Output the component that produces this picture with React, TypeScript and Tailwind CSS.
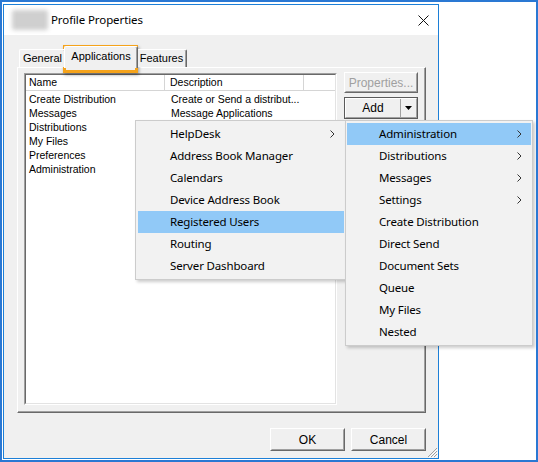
import React from "react";

function Chevron() {
  return (
    <svg width="5" height="8" viewBox="0 0 5 8" className="absolute right-[9px] top-[7px]">
      <path d="M0.5 0.5 L4 4 L0.5 7.5" fill="none" stroke="#333" strokeWidth="1" />
    </svg>
  );
}

function MenuItem({ label, hi, sub }: { label: string; hi?: boolean; sub?: boolean }) {
  return (
    <div className={`relative h-[22px] flex items-center pl-[32px] text-[11.5px] tracking-[-0.15px] text-black ${hi ? "bg-[#91c9f7]" : ""}`}>
      <span>{label}</span>
      {sub && <Chevron />}
    </div>
  );
}

function Tab({ label, w, selected }: { label: string; w: string; selected?: boolean }) {
  return (
    <div
      className={`${w} ${
        selected ? "h-[22px] -mb-px -mx-[2px] relative z-10 pb-[3px]" : "h-[18px]"
      } bg-[#f0f0f0] border-t border-l border-white border-r border-r-[#696969] rounded-t-[2px] shadow-[inset_-1px_0_0_#a0a0a0] flex items-center justify-center text-[11px]`}
    >
      {label}
    </div>
  );
}

function Raised({ className, children }: { className?: string; children?: React.ReactNode }) {
  return (
    <div className={`border border-t-white border-l-white border-r-[#696969] border-b-[#696969] ${className ?? ""}`}>
      <div className="w-full h-full border border-t-[#f0f0f0] border-l-[#f0f0f0] border-r-[#a0a0a0] border-b-[#a0a0a0] bg-[#f0f0f0] flex items-center justify-center">
        {children}
      </div>
    </div>
  );
}

export default function App() {
  const rows = [
    ["Create Distribution", "Create or Send a distribut..."],
    ["Messages", "Message Applications"],
    ["Distributions", ""],
    ["My Files", ""],
    ["Preferences", ""],
    ["Administration", ""],
  ];
  const menu1 = ["HelpDesk", "Address Book Manager", "Calendars", "Device Address Book", "Registered Users", "Routing", "Server Dashboard"];
  const menu2 = ["Administration", "Distributions", "Messages", "Settings", "Create Distribution", "Direct Send", "Document Sets", "Queue", "My Files", "Nested"];

  return (
    <div className="relative w-[538px] h-[462px] bg-white border-2 border-[#2a78d3] pl-px pt-[2px] overflow-hidden font-['Liberation_Sans',Arial,sans-serif] text-black">
      {/* window */}
      <div className="w-[436px] h-[455px] border border-[#1c7fd7] flex flex-col">
        {/* title bar */}
        <div className="h-[30px] bg-white flex items-center relative">
          <div className="ml-[8px] w-[36px] h-[20px] bg-[#cfcfcf] blur-[2px] rounded-[2px]" />
          <div className="ml-[3px] text-[11.5px] tracking-[-0.1px] font-['Noto_Sans','Open_Sans',sans-serif]">Profile Properties</div>
          <svg width="11" height="11" viewBox="0 0 11 11" className="ml-auto mr-[9px]">
            <path d="M0.5 0.5 L10.5 10.5 M10.5 0.5 L0.5 10.5" stroke="#111" strokeWidth="1" />
          </svg>
        </div>
        {/* body */}
        <div className="flex-1 bg-[#f0f0f0] pt-[11px] flex flex-col relative">
          {/* tabs */}
          <div className="ml-[13px] h-[21px] pl-[2px] flex items-end relative z-10">
            <Tab label="General" w="w-[47px]" />
            <Tab label="Applications" w="w-[74px]" selected />
            <Tab label="Features" w="w-[51px]" />
          </div>
          {/* panel */}
          <div className="ml-[13px] w-[409px] h-[346px] border border-t-white border-l-white border-r-[#696969] border-b-[#696969] shadow-[inset_-1px_-1px_0_#a0a0a0] pt-[4px] pl-[6px] flex gap-[7px]">
            {/* list */}
            <div className="mt-px w-[313px] h-[332px] border border-t-[#a0a0a0] border-l-[#a0a0a0] border-r-white border-b-white">
              <div className="w-full h-full border border-t-[#696969] border-l-[#696969] border-r-[#e3e3e3] border-b-[#e3e3e3] bg-white text-[10.5px]">
                <div className="flex h-[16px] border-b border-[#d5d5d5]">
                  <div className="w-[139px] border-r border-[#d5d5d5] pl-[3px] flex items-center">Name</div>
                  <div className="w-[139px] border-r border-[#d5d5d5] pl-[5px] flex items-center">Description</div>
                  <div className="flex-1" />
                </div>
                <div className="pt-[2px]">
                  {rows.map(([a, b]) => (
                    <div key={a} className="flex h-[14px] items-center">
                      <div className="w-[142px] pl-[3px] whitespace-nowrap">{a}</div>
                      <div className="pl-[3px] whitespace-nowrap">{b}</div>
                    </div>
                  ))}
                </div>
              </div>
            </div>
            {/* side buttons */}
            <div className="w-[74px] flex flex-col gap-[4px]">
              <Raised className="h-[21px] text-[12px] text-[#a0a0a0]">Properties...</Raised>
              <div className="h-[22px] border border-[#5a5a5a]">
                <div className="w-full h-full border border-t-white border-l-white border-r-[#a0a0a0] border-b-[#a0a0a0] flex text-[12px]">
                  <div className="flex-1 flex items-center justify-center border-r border-[#a0a0a0]">Add</div>
                  <div className="w-[15px] flex items-center justify-center">
                    <svg width="7" height="4" viewBox="0 0 7 4"><path d="M0 0 H7 L3.5 4 Z" fill="#000" /></svg>
                  </div>
                </div>
              </div>
            </div>
          </div>
          {/* bottom buttons */}
          <div className="mt-[15px] mr-[12px] flex justify-end gap-[6px]">
            <Raised className="w-[75px] h-[23px] text-[12px]">OK</Raised>
            <Raised className="w-[75px] h-[23px] text-[12px]">Cancel</Raised>
          </div>
          {/* grip */}
          <svg width="12" height="12" viewBox="0 0 12 12" className="absolute right-0 bottom-0">
            <path d="M11 2 L2 11 M11 5 L5 11 M11 8 L8 11" stroke="#a0a0a0" strokeWidth="1" />
            <path d="M12 3 L3 12 M12 6 L6 12 M12 9 L9 12" stroke="#ffffff" strokeWidth="1" />
          </svg>
        </div>
      </div>

      {/* orange highlight */}
      <div className="absolute left-[61px] top-[43px] w-[75px] h-[28px] border-[3px] border-[#f5a31b] shadow-[1px_2px_3px_rgba(0,0,0,0.35)]" />

      {/* menu 1 */}
      <div className="absolute left-[133px] top-[118px] w-[212px] border border-[#cccccc] bg-[#f2f2f2] p-[2px] shadow-[2px_2px_3px_rgba(0,0,0,0.2)] font-['Noto_Sans','Open_Sans',sans-serif]">
        {menu1.map((m, i) => (
          <MenuItem key={m} label={m} hi={i === 4} sub={i === 0} />
        ))}
      </div>
      {/* menu 2 */}
      <div className="absolute left-[343px] top-[118px] w-[188px] border border-[#cccccc] bg-[#f2f2f2] py-[2px] px-px shadow-[2px_2px_3px_rgba(0,0,0,0.2)] font-['Noto_Sans','Open_Sans',sans-serif]">
        {menu2.map((m, i) => (
          <MenuItem key={m} label={m} hi={i === 0} sub={i < 4} />
        ))}
      </div>
    </div>
  );
}
